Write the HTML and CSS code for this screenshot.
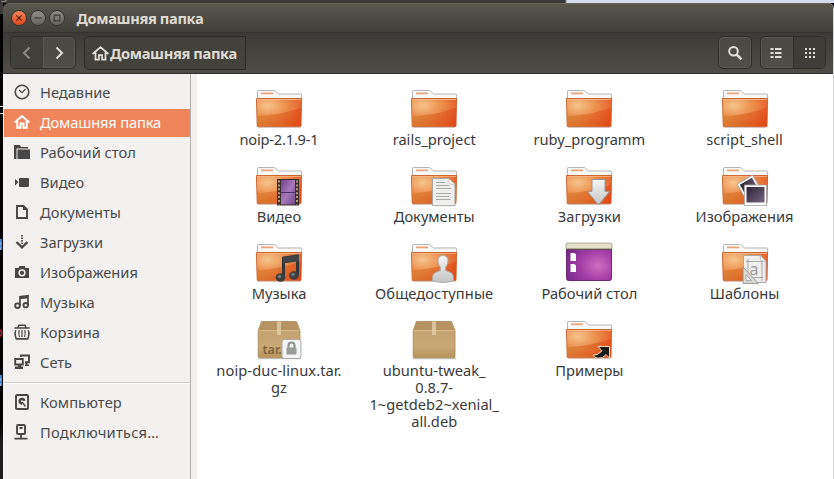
FILE: index.html
```
<!DOCTYPE html>
<html lang="ru">
<head>
<meta charset="utf-8">
<title>Домашняя папка</title>
<link rel="stylesheet" href="styles.css">
</head>
<body>
<svg class="defs" width="0" height="0" aria-hidden="true">
  <defs>
    <radialGradient id="gf" cx=".25" cy=".25" r=".95"><stop offset="0" stop-color="#f5c48c"/><stop offset=".45" stop-color="#ec8c4a"/><stop offset="1" stop-color="#e04e1e"/></radialGradient>
    <linearGradient id="gs" x1="0" y1="0" x2="1" y2="0"><stop offset="0" stop-color="#d5802f" stop-opacity=".65"/><stop offset="1" stop-color="#e2420f" stop-opacity=".5"/></linearGradient>
    <linearGradient id="gb" x1="0" y1="0" x2="0" y2="1"><stop offset="0" stop-color="#c2a06e"/><stop offset=".7" stop-color="#c8a875"/><stop offset="1" stop-color="#b8935c"/></linearGradient>
    <linearGradient id="gg" x1="0" y1="0" x2="0" y2="1"><stop offset="0" stop-color="#f6f6f6"/><stop offset="1" stop-color="#c4c4c4"/></linearGradient>
    <radialGradient id="gp" cx=".7" cy=".6" r=".75"><stop offset="0" stop-color="#cf6fc0"/><stop offset=".5" stop-color="#a63fa8"/><stop offset="1" stop-color="#7a2a8c"/></radialGradient>
    <linearGradient id="gv" x1="0" y1="0" x2="1" y2="1"><stop offset="0" stop-color="#6d4285"/><stop offset=".5" stop-color="#a878bd"/><stop offset="1" stop-color="#704a8c"/></linearGradient>
    <linearGradient id="gi" x1="0" y1="0" x2="1" y2="1"><stop offset="0" stop-color="#2c2435"/><stop offset="1" stop-color="#77657f"/></linearGradient>
    <g id="folder">
      <path d="M2.5 16V7.2q0-.7.8-.7h15.5q1 0 1.700.8l3.200 2.700H46q.6 0 .6.7V16z" fill="#f8f8f8" stroke="#b5b5b5"/>
      <path d="M6 9.300h12" stroke="#eba37c" stroke-width="1.800"/>
      <path d="M1.400 14.500h45.200L46 42q0 .8-1 .8H3.200q-1 0-1-.8z" fill="url(#gf)" stroke="#c75f2c" stroke-width=".9"/>
      <path d="M1.800 32C16 31.500 32 29 46.200 23.500L45.700 42.300H2.500z" fill="url(#gs)"/>
      <path d="M2 15.500h44" stroke="#f8b98a" stroke-width=".8"/>
      <path d="M3 43.200h42" stroke="#b9a394" stroke-width=".8" opacity=".7"/>
    </g>
    <g id="box">
      <path d="M3 43.500h43" stroke="#999" stroke-width="1.500" opacity=".5"/>
      <path d="M6.500 6.500h35L45 15.500v26q0 1.300-1.300 1.300H4.500q-1.300 0-1.300-1.300v-26z" fill="url(#gb)" stroke="#a98756" stroke-width=".8"/>
      <path d="M6.800 7h34.400l3.300 8.500H3.700z" fill="#b79364"/>
      <path d="M3.600 15.600h41" stroke="#dabb8c"/>
      <path d="M22 6.500h4V20h-4z" fill="#e0cbaa" opacity=".85"/>
    </g>
  </defs>
</svg>
<div class="desktop">
<div class="strip"><span class="st1">s  ~</span></div>
<div class="terminal"><i class="m1"></i><i class="m2">d</i><i class="m3">o</i><i class="m4">d</i></div>
<div class="window">
  <header class="titlebar">
    <span class="wb close"><svg viewBox="0 0 16 16"><path d="M5 5l6 6m0-6l-6 6" stroke="#58230f" stroke-width="1.400"/></svg></span>
    <span class="wb"><svg viewBox="0 0 16 16"><path d="M3.800 8h8.400" stroke="#3a3934" stroke-width="1.300"/></svg></span>
    <span class="wb"><svg viewBox="0 0 16 16"><path d="M4.700 4.700h6.600v6.600H4.700z" fill="none" stroke="#3a3934" stroke-width="1.300"/></svg></span>
    <h1 class="wtitle">Домашняя папка</h1>
  </header>
  <nav class="toolbar">
    <div class="group">
      <span class="btn back"><svg viewBox="0 0 16 16"><path d="M10.500 2.500L5 8l5.500 5.500" fill="none" stroke="#8d8b84" stroke-width="2"/></svg></span>
      <span class="btn fwd"><svg viewBox="0 0 16 16"><path d="M5.500 2.500L11 8l-5.500 5.500" fill="none" stroke="#e0ded8" stroke-width="2"/></svg></span>
    </div>
    <div class="path"><svg viewBox="0 0 16 16"><path d="M.6 8.500L8 2l7.400 6.500M3.300 7v6.700h3.200V9.500h3v4.200h3.200V7" fill="none" stroke="#e0ded8" stroke-width="1.700"/></svg><b class="ptext">Домашняя папка</b></div>
    <div class="spacer"></div>
    <div class="group single"><span class="btn"><svg viewBox="0 0 16 16"><circle cx="6.500" cy="6.300" r="4.300" fill="none" stroke="#e0ded8" stroke-width="2"/><path d="M9.500 9.300l5 5" stroke="#e0ded8" stroke-width="2.400"/></svg></span></div>
    <div class="group views">
      <span class="btn"><svg viewBox="0 0 16 16"><path d="M1.500 4h3M1.500 8h3M1.500 12h3M6 4h6.500M6 8h6.500M6 12h6.500" stroke="#e0ded8" stroke-width="2"/></svg></span>
      <span class="btn on"><svg viewBox="0 0 16 16"><path d="M4 4h10M4 8h10M4 12h10" stroke="#e0ded8" stroke-width="2" stroke-dasharray="2"/></svg></span>
    </div>
  </nav>
  <div class="content">
    <aside class="sidebar">
      <div class="place"><svg viewBox="0 0 16 16"><circle cx="8" cy="8" r="6.800" fill="none" stroke="#474747" stroke-width="1.600"/><path d="M5 6l3 2.700L11.500 5" fill="none" stroke="#474747" stroke-width="1.200"/></svg><span>Недавние</span></div>
      <div class="place sel"><svg viewBox="0 0 16 16"><path d="M.6 8.500L8 2l7.400 6.500M3.300 7v6.700h3.200V9.500h3v4.200h3.200V7" fill="none" stroke="#fff" stroke-width="2"/></svg><span class="p2">Домашняя папка</span></div>
      <div class="place"><svg viewBox="0 0 16 16"><path d="M0 1h6l1 2h7v1.500H2.500V15H0z M3.500 5.500H16V15H3.500z" fill="#474747"/></svg><span>Рабочий стол</span></div>
      <div class="place"><svg viewBox="0 0 16 16"><path d="M1 5l3.500 3L1 11.500z" fill="#474747"/><rect x="5" y="4" width="10" height="9" rx="1" fill="#474747"/></svg><span>Видео</span></div>
      <div class="place"><svg viewBox="0 0 16 16"><path d="M3 2h6.500L13 5.500V14H3z" fill="none" stroke="#474747" stroke-width="1.900"/><path d="M9 2v4h4" fill="#474747"/></svg><span>Документы</span></div>
      <div class="place"><svg viewBox="0 0 16 16"><path d="M8 1v9" stroke="#474747" stroke-width="1.800" stroke-dasharray="1.500 1"/><path d="M2.500 8L8 13.300 13.500 8" fill="none" stroke="#474747" stroke-width="2.300"/></svg><span>Загрузки</span></div>
      <div class="place"><svg viewBox="0 0 16 16"><path d="M1 4h3.500l1-2h5l1 2H15v10H1z" fill="#474747"/><circle cx="8" cy="8.800" r="2.900" fill="none" stroke="#f2f1f0" stroke-width="1.500"/></svg><span>Изображения</span></div>
      <div class="place"><svg viewBox="0 0 16 16"><path d="M6 11.500V2.800l8-1V11M6 4.300l8-.8" fill="none" stroke="#474747" stroke-width="1.700"/><circle cx="3.500" cy="11.700" r="2.300" fill="none" stroke="#474747" stroke-width="1.900"/><circle cx="11.700" cy="11.200" r="2.200" fill="none" stroke="#474747" stroke-width="1.900"/></svg><span>Музыка</span></div>
      <div class="place"><svg viewBox="0 0 16 16"><path d="M.4 4h15.200M4 3.500L5 1.200h6l1 2.300M1.800 6.200q-1.600 4 .5 8.700h11.400q2.100-4.700.5-8.700" fill="none" stroke="#474747" stroke-width="1.600"/><path d="M5.200 6q-1 3.500.3 7M8 6v7M10.800 6q1 3.500-.3 7" fill="none" stroke="#474747" stroke-width="1.200"/></svg><span>Корзина</span></div>
      <div class="place"><svg viewBox="0 0 16 16"><path d="M1.200 5h7.600v5.500H1.200zM7 3V1.500h8v6.800h-4" fill="none" stroke="#474747" stroke-width="1.900"/><path d="M4 11h3v1.500h2V15H1v-2.500h3zM11.500 9h2v1.500H15V12h-4z" fill="#474747"/></svg><span>Сеть</span></div>
      <hr class="sep">
      <div class="place"><svg viewBox="0 0 16 16"><rect x="2" y="1" width="12" height="14" rx="1" fill="none" stroke="#474747" stroke-width="1.900"/><path d="M8 9.500a2.300 2.300 0 1 1 2.300-2.600" fill="none" stroke="#474747" stroke-width="2.500"/><path d="M8 8l3.500 4.500" stroke="#474747" stroke-width="1.400"/></svg><span class="p11">Компьютер</span></div>
      <div class="place"><svg viewBox="0 0 16 16"><rect x="3" y="1" width="8" height="9" rx="1" fill="none" stroke="#474747" stroke-width="1.900"/><path d="M5.500 4h3M7 10v4M.5 14.600h13" stroke="#474747" stroke-width="1.800"/></svg><span class="p12">Подключиться…</span></div>
    </aside>
    <div class="gutter"></div>
    <main class="grid">
      <figure><svg class="ic" viewBox="0 0 48 48"><use href="#folder"/></svg><figcaption class="f1">noip-2.1.9-1</figcaption></figure>
      <figure><svg class="ic" viewBox="0 0 48 48"><use href="#folder"/></svg><figcaption>rails_project</figcaption></figure>
      <figure><svg class="ic" viewBox="0 0 48 48"><use href="#folder"/></svg><figcaption>ruby_programm</figcaption></figure>
      <figure><svg class="ic" viewBox="0 0 48 48"><use href="#folder"/></svg><figcaption>script_shell</figcaption></figure>

      <figure><svg class="ic" viewBox="0 0 48 48"><use href="#folder"/><path d="M22 18h22v26.500H22z" fill="#3b302b"/><path d="M26 19h14v24.500H26z" fill="url(#gv)"/><path d="M26 31.500h14" stroke="#4b3260"/><path d="M24 19.500v24M42 19.500v24" stroke="#c8a582" stroke-width="1.800" stroke-dasharray="2 1.900"/></svg><figcaption>Видео</figcaption></figure>
      <figure><svg class="ic" viewBox="0 0 48 48"><use href="#folder"/><path d="M22.500 17.500h16l6.500 6v21.200H22.500z" fill="#efefed" stroke="#a9a7a3"/><path d="M38.500 17.500l1 5.500 5.500.5z" fill="#fff" stroke="#bbb" stroke-width=".7"/><path d="M26 21.500h9M26 24.500h13M26 27.500h15M26 32.500h15M26 35.500h13M26 38.500h15" stroke="#a3a3a1" stroke-width=".9"/></svg><figcaption>Документы</figcaption></figure>
      <figure><svg class="ic" viewBox="0 0 48 48"><use href="#folder"/><path d="M27 18.500h13v12h4.500L33.500 44 22.500 30.500H27z" fill="url(#gg)" stroke="#999"/></svg><figcaption>Загрузки</figcaption></figure>
      <figure><svg class="ic" viewBox="0 0 48 48"><use href="#folder"/><g transform="rotate(-30 27 26)"><path d="M19 18h18v18H19z" fill="#fff" stroke="#999" stroke-width=".8"/><path d="M21 20h14v14H21z" fill="url(#gi)"/></g><path d="M23.500 24h22v20.500h-22z" fill="#fff" stroke="#a5a5a5" stroke-width=".8"/><path d="M25.500 26h18v15.500h-18z" fill="url(#gi)"/></svg><figcaption>Изображения</figcaption></figure>

      <figure><svg class="ic" viewBox="0 0 48 48"><use href="#folder"/><path d="M28.500 39V20l14-2v19" fill="none" stroke="#333538" stroke-width="3"/><path d="M28 19.500l16-2.300v6L28 25.500z" fill="#414347"/><ellipse cx="25.500" cy="39.500" rx="4.800" ry="4.200" fill="#3c3e40"/><ellipse cx="39" cy="37.500" rx="4.800" ry="4.200" fill="#3c3e40"/><circle cx="24.500" cy="38.500" r="1.700" fill="#777"/><circle cx="38" cy="36.500" r="1.700" fill="#777"/></svg><figcaption>Музыка</figcaption></figure>
      <figure><svg class="ic" viewBox="0 0 48 48"><use href="#folder"/><path d="M33 17.500c-7 0-5.500 8.500-2.700 11.500v3.500c-4 2-7.800 1.500-7.800 8v2.500q10.500 3 21 0v-2.500c0-6.500-3.800-6-7.800-8V29c2.800-3 4.300-11.500-2.700-11.500z" fill="url(#gg)" stroke="#a9a9a9"/></svg><figcaption class="f10">Общедоступные</figcaption></figure>
      <figure><svg class="ic" viewBox="0 0 48 48"><rect x="1.500" y="5.500" width="45" height="37" rx="2" fill="url(#gp)" stroke="#6c2a70"/><path d="M1 11V7q0-2 2-2h42q2 0 2 2v4z" fill="#e4e0cb" stroke="#8b8471" stroke-width=".6"/><path d="M1 11.300h46" stroke="#5a4c42"/><path d="M5.500 15h4l1.500 1.500V23H5.500zM5.500 26h4l1.500 1.500V34H5.500z" fill="#fff"/></svg><figcaption>Рабочий стол</figcaption></figure>
      <figure><svg class="ic" viewBox="0 0 48 48"><use href="#folder"/><path d="M22.500 17.500h17l5.500 6v21H22.500z" fill="#eeeeec" stroke="#a9a9a9"/><path d="M39 17.500l1 5 5 1z" fill="#fff" stroke="#aaa" stroke-width=".7"/><path d="M25 23.500h17M25 39.500h17M27 21v22M41 23v20" stroke="#999" stroke-width=".8"/><text x="28.500" y="37" font-size="16" class="ga">a</text><path d="M22 29l15.500 16.500H22z" fill="#d4d4d2" fill-opacity=".8" stroke="#8f8f8f" stroke-width=".8"/><path d="M25 36.500l5.500 6H25z" fill="#eee" stroke="#999" stroke-width=".7"/></svg><figcaption>Шаблоны</figcaption></figure>

      <figure><svg class="ic" viewBox="0 0 48 48"><use href="#box"/><text x="7.500" y="38.500" font-size="12.500" class="tar">tar.</text><rect x="27" y="24.500" width="19" height="19" rx="2.500" fill="#f4f4f4" stroke="#aaa"/><path d="M33.500 33v-2.500q0-3 3-3t3 3V33" fill="none" stroke="#8d908a" stroke-width="2"/><rect x="31.500" y="32.500" width="10" height="7" rx="1" fill="#9a9d97"/></svg><figcaption class="f13">noip-duc-linux.tar.<br>gz</figcaption></figure>
      <figure><svg class="ic" viewBox="0 0 48 48"><use href="#box"/></svg><figcaption>ubuntu-tweak_<br>0.8.7-<br>1~getdeb2~xenial_<br>all.deb</figcaption></figure>
      <figure><svg class="ic" viewBox="0 0 48 48"><use href="#folder"/><path d="M33 31.500h11.500V43l-3.500-3.500q-3 4.500-8 3.700-4-.5-5-3 4 .8 9-4.300z" fill="#1b1b1b" stroke="#f5dcc0" stroke-width="1"/></svg><figcaption>Примеры</figcaption></figure>
    </main>
  </div>
</div>
</div>
</body>
</html>
```
FILE: styles.css
```
* { box-sizing: border-box; }
body { margin: 0; font: 14.67px/17px "Noto Sans", "Open Sans", sans-serif; color: #3c3c3c; background: #000; }
svg { display: block; flex: none; }
.defs { position: absolute; }
.desktop { width: 834px; height: 479px; overflow: hidden; display: grid; grid-template: 3px 476px / 3px 831px; }
.strip { grid-column: 1 / 3; overflow: hidden; background: linear-gradient(90deg, #3b3a38 0 565px, #d3dcec 567px); }
.st1 { display: block; margin-top: -9px; color: #8c8c88; font: 13px/14px "DejaVu Sans Mono", monospace; }
.terminal { position: relative; background: linear-gradient(#3b3a38 0 11px, #000 11px 420px, #1d1d20 440px); overflow: hidden; }
.terminal i { position: absolute; right: 0; font: 14px/14px "DejaVu Sans Mono", monospace; }
.m1 { top: 103px; width: 3px; height: 8px; border: solid #ddd; border-width: 1px 0; }
.m2 { top: 235px; color: #aab6ec; }
.m3 { top: 322px; color: #d8232a; }
.m4 { top: 371px; color: #aab6ec; }
.window { display: flex; flex-direction: column; border-radius: 6px 6px 0 0; overflow: hidden; border-right: 1px solid #d5d5d5; background: #3f3e39; }
.titlebar { height: 29px; display: flex; align-items: center; gap: 3px; padding: 0 0 1px 7.500px; background: linear-gradient(#5a574e, #403f39); border-top: 1px solid #69665c; }
.wb { width: 16px; height: 16px; border-radius: 50%; background: linear-gradient(#8f8d84, #65635c); border: 1px solid #35342f; }
.wb svg { width: 14px; height: 14px; }
.close { background: linear-gradient(#f5835c, #e0481b); }
.wtitle { margin: 0 0 0 9px; font-size: 14.67px; font-weight: 700; line-height: 20px; letter-spacing: -.36px; color: #dfdbd2; white-space: nowrap; }
.toolbar { height: 42px; display: flex; padding: 3px 7px; background: linear-gradient(#3c3b37, #4f4c45); border-top: 1px solid #34332f; border-bottom: 1px solid #2f2e2a; }
.group { display: flex; width: 66px; height: 33px; border: 1px solid #2f2e2a; border-radius: 5px; overflow: hidden; background: linear-gradient(#4a4842, #504e47); box-shadow: inset 0 0 0 1px #59574f; }
.btn { flex: 1; display: flex; align-items: center; justify-content: center; }
.btn svg { width: 16px; height: 16px; }
.back { background: #403f3a; border-right: 1px solid #5a5850; }
.path { margin-left: 8px; width: 162px; height: 34px; display: flex; align-items: center; padding-left: 7px; border: 1px solid #2c2b27; border-radius: 5px 0 0 5px; background: #42413c; color: #dfdbd2; white-space: nowrap; }
.path svg { width: 17px; height: 17px; margin-right: 1px; }
.ptext { letter-spacing: -.36px; }
.spacer { flex: 1; }
.single { width: 34px; margin-right: 8px; }
.views .on { background: #3e3d38; border-left: 1px solid #2f2e2a; }
.content { flex: 1; display: flex; background: #fff; }
.sidebar { width: 188px; padding: 5px 0 0 1px; background: #f2f1f0; border-right: 1px solid #b4b2ae; color: #4a4a4a; }
.place { height: 28px; margin-bottom: 2px; display: flex; align-items: center; padding: 0 0 2px 10px; gap: 10px; white-space: nowrap; }
.place svg { width: 16px; height: 16px; }
.sel { background: #f0845a; color: #fff; }
.p2 { letter-spacing: -.15px; }
.p11 { letter-spacing: .1px; }
.p12 { letter-spacing: .26px; }
.sep { margin: 5px 0; border: 0; border-top: 1px solid #d3d1ce; border-bottom: 1px solid #fff; height: 2px; }
.gutter { width: 6px; background: #f2f1f0; }
.grid { flex: 1; display: grid; grid-template-columns: repeat(4, 155.200px); grid-auto-rows: 77px; padding: 10px 0 0 4.400px; align-content: start; }
figure { margin: 0; display: flex; flex-direction: column; align-items: center; }
.ic { width: 48px; height: 48px; }
figcaption { text-align: center; white-space: nowrap; color: #3a3a3a; margin-top: -1px; }
.f1 { letter-spacing: -.22px; }
.f10 { letter-spacing: .08px; }
.f13 { letter-spacing: .08px; }
.ga { font-family: "Noto Sans", sans-serif; fill: #9b9b9b; }
.tar { font-family: "Noto Sans", sans-serif; font-weight: 600; fill: #7d6340; }
```
